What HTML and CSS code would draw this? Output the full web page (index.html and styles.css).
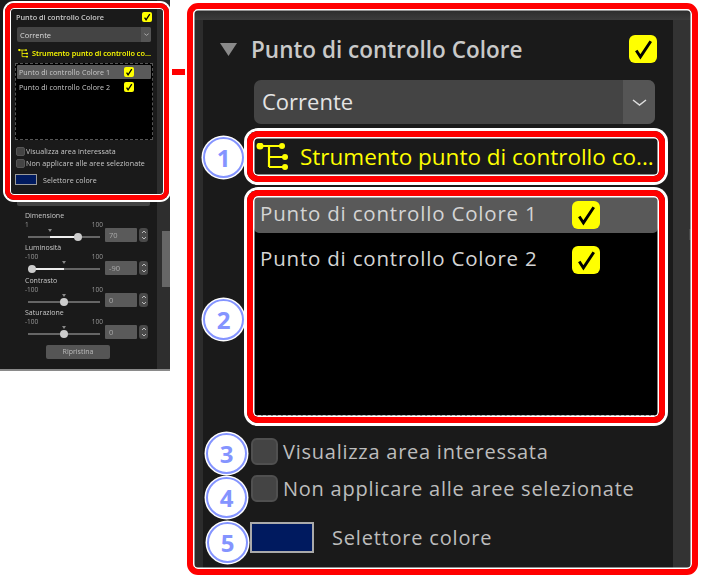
FILE: index.html
```html
<!DOCTYPE html>
<html lang="it">
<head>
<meta charset="utf-8">
<title>Punto di controllo Colore</title>
<link rel="stylesheet" href="styles.css">
</head>
<body>
<div class="canvas">

  <section class="mini">
    <div class="mini-main">
      <div class="mini-head">
        <span class="mini-title">Punto di controllo Colore</span>
        <span class="check mini-check"><svg viewBox="0 0 27 27"><path d="M7 15l4 6L21 6"/></svg></span>
      </div>
      <div class="mini-select"><span>Corrente</span><span class="mini-arrow"><svg viewBox="0 0 15 7"><path d="M1 1l6.500 5L14 1"/></svg></span></div>
      <div class="mini-tool">
        <svg class="mini-tree" viewBox="0 0 32 28"><path d="M4 3H26M13 3V24M13 14H29M13 24H29"/><circle cx="4" cy="3" r="3.500"/><circle cx="26" cy="3" r="3"/><circle cx="29" cy="14" r="3"/><circle cx="29" cy="24" r="3"/></svg>
        <span>Strumento punto di controllo co...</span>
      </div>
      <div class="mini-list">
        <div class="mini-row mini-row-on"><span class="mini-row-text">Punto di controllo Colore 1</span><span class="check mini-check"><svg viewBox="0 0 27 27"><path d="M7 15l4 6L21 6"/></svg></span></div>
        <div class="mini-row"><span class="mini-row-text">Punto di controllo Colore 2</span><span class="check mini-check"><svg viewBox="0 0 27 27"><path d="M7 15l4 6L21 6"/></svg></span></div>
      </div>
      <label class="mini-opt"><span class="mini-box"></span>Visualizza area interessata</label>
      <label class="mini-opt mini-opt-2"><span class="mini-box"></span>Non applicare alle aree selezionate</label>
      <div class="mini-color"><span class="mini-swatch"></span>Selettore colore</div>
      <div class="mini-bar"></div>

      <div class="slider">
        <div class="sl-name">Dimensione</div>
        <div class="sl-scale"><span>1</span><span>100</span></div>
        <div class="sl-track"><i class="sl-fill" style="left:30%;width:40%"></i><b class="sl-mark" style="left:30%"></b><em class="sl-thumb" style="left:70%"></em></div>
        <div class="sl-input">70</div>
        <div class="sl-spin"><svg viewBox="0 0 8 14"><path d="M2 5l2-2 2 2M2 9l2 2 2-2"/></svg></div>
      </div>
      <div class="slider">
        <div class="sl-name">Luminosità</div>
        <div class="sl-scale"><span>-100</span><span>100</span></div>
        <div class="sl-track"><i class="sl-fill" style="left:5%;width:45%"></i><b class="sl-mark" style="left:50%"></b><em class="sl-thumb" style="left:5%"></em></div>
        <div class="sl-input">-90</div>
        <div class="sl-spin"><svg viewBox="0 0 8 14"><path d="M2 5l2-2 2 2M2 9l2 2 2-2"/></svg></div>
      </div>
      <div class="slider">
        <div class="sl-name">Contrasto</div>
        <div class="sl-scale"><span>-100</span><span>100</span></div>
        <div class="sl-track"><b class="sl-mark" style="left:50%"></b><em class="sl-thumb" style="left:50%"></em></div>
        <div class="sl-input">0</div>
        <div class="sl-spin"><svg viewBox="0 0 8 14"><path d="M2 5l2-2 2 2M2 9l2 2 2-2"/></svg></div>
      </div>
      <div class="slider">
        <div class="sl-name">Saturazione</div>
        <div class="sl-scale"><span>-100</span><span>100</span></div>
        <div class="sl-track"><b class="sl-mark" style="left:50%"></b><em class="sl-thumb" style="left:50%"></em></div>
        <div class="sl-input">0</div>
        <div class="sl-spin"><svg viewBox="0 0 8 14"><path d="M2 5l2-2 2 2M2 9l2 2 2-2"/></svg></div>
      </div>
      <div class="mini-reset">Ripristina</div>
    </div>
    <div class="mini-side"><div class="mini-thumb"></div></div>
  </section>
  <div class="mini-frame"></div>
  <div class="connector"></div>

  <section class="panel">
    <div class="panel-strip"></div>
    <div class="panel-body">
      <div class="panel-gutter"></div>
      <div class="panel-main">
        <div class="head">
          <svg class="caret" viewBox="0 0 17 13"><path d="M0 0H17L8.500 13Z"/></svg>
          <span class="head-title">Punto di controllo Colore</span>
          <span class="check"><svg viewBox="0 0 27 27"><path d="M7 15l4 6L21 6"/></svg></span>
        </div>
        <div class="select">
          <span class="select-text">Corrente</span>
          <span class="select-arrow"><svg viewBox="0 0 15 7"><path d="M1 1l6.500 5L14 1"/></svg></span>
        </div>
        <div class="tool">
          <svg class="tree" viewBox="0 0 32 28"><path d="M4 3H26M13 3V24M13 14H29M13 24H29"/><circle cx="4" cy="3" r="3.500"/><circle cx="26" cy="3" r="3"/><circle cx="29" cy="14" r="3"/><circle cx="29" cy="24" r="3"/></svg>
          <span class="tool-text">Strumento punto di controllo co...</span>
        </div>
        <div class="list">
          <div class="row row-on"><span class="row-text">Punto di controllo Colore 1</span><span class="check"><svg viewBox="0 0 27 27"><path d="M7 15l4 6L21 6"/></svg></span></div>
          <div class="row"><span class="row-text">Punto di controllo Colore 2</span><span class="check"><svg viewBox="0 0 27 27"><path d="M7 15l4 6L21 6"/></svg></span></div>
        </div>
        <label class="opt opt-a"><span class="box"></span>Visualizza area interessata</label>
        <label class="opt opt-b"><span class="box"></span>Non applicare alle aree selezionate</label>
        <div class="color"><span class="swatch"></span>Selettore colore</div>
      </div>
      <div class="panel-side"><div class="side-mark"></div></div>
    </div>
  </section>
  <div class="frame"></div>
  <div class="callout callout-1"></div>
  <div class="callout callout-2"></div>
  <div class="num num-1">1</div>
  <div class="num num-2">2</div>
  <div class="num num-3">3</div>
  <div class="num num-4">4</div>
  <div class="num num-5">5</div>
</div>
</body>
</html>
```
FILE: styles.css
```css
* { box-sizing: border-box; }
html, body { margin: 0; padding: 0; background: #fff; }
body { font-family: "Open Sans", "Noto Sans", sans-serif; color: #c8c8c8; }
.canvas { position: relative; width: 704px; height: 578px; overflow: hidden; }

/* shared checkbox */
.check { display: flex; align-items: center; justify-content: center; flex: none; width: 28px; height: 28px; background: #ff0; border-radius: 6px; }
.check svg { width: 100%; height: 100%; }
.check path { fill: none; stroke: #000; stroke-width: 2.800; }

/* ---------- thumbnail panel ---------- */
.mini { position: absolute; left: 0; top: 0; width: 170px; height: 371px; display: flex; background: #1a1a1a; border-bottom: 2px solid #8a8a8a; filter: blur(0.25px); }
.mini-main { width: 157px; padding-top: 12px; flex: none; }
.mini-side { flex: 1; background: #2e2e2e; padding: 231px 0 0 5px; }
.mini-thumb { width: 8px; height: 56px; background: #666; }
.mini-head { display: flex; justify-content: space-between; align-items: center; height: 10px; padding: 0 5px 0 16px; }
.mini-title { font-size: 7.300px; font-weight: 600; white-space: nowrap; }
.mini-check { width: 10px; height: 10px; border-radius: 2px; }
.mini-check path { stroke-width: 3.500; }
.mini-select { display: flex; justify-content: space-between; align-items: center; height: 15px; margin: 5px 6px 0 17px; padding-left: 3px; background: #444; border-radius: 2px; font-size: 7.500px; color: #ddd; }
.mini-arrow { width: 10px; height: 15px; background: #555; border-radius: 0 2px 2px 0; display: flex; align-items: center; justify-content: center; }
.mini-arrow svg { width: 5px; height: 3px; }
.mini-arrow path { fill: none; stroke: #ccc; stroke-width: 2; }
.mini-tool { display: flex; align-items: center; gap: 4px; height: 10px; margin: 6px 0 0 18px; color: #ff0; font-size: 7.300px; font-weight: 600; white-space: nowrap; }
.mini-tree { width: 10px; height: 9px; flex: none; }
.mini-tree path { fill: none; stroke: #ff0; stroke-width: 2.500; }
.mini-tree circle { fill: #ff0; }
.mini-list { height: 77px; margin: 5px 4px 0 15px; padding: 1px; background: #000; border: 1px dashed #555; }
.mini-row { display: flex; align-items: center; height: 14px; padding: 0 0 0 2px; margin-bottom: 1px; }
.mini-row-on { background: #5a5a5a; border-radius: 1px; }
.mini-row-text { width: 105px; font-size: 7.100px; letter-spacing: 0.1px; white-space: nowrap; }
.mini-opt { display: flex; align-items: center; gap: 1px; height: 10px; margin: 6px 0 0 16px; font-size: 7.100px; letter-spacing: 0.1px; white-space: nowrap; }
.mini-opt-2 { margin-top: 2px; }
.mini-box { width: 9px; height: 9px; background: #444; border: 1px solid #555; border-radius: 2px; flex: none; }
.mini-color { display: flex; align-items: center; gap: 6px; height: 11px; margin: 6px 0 0 15px; font-size: 7.100px; letter-spacing: 0.1px; }
.mini-swatch { width: 22px; height: 11px; background: #001a5f; border: 1px solid #999; }
.mini-bar { height: 12px; margin: 9px 7px 5px 17px; background: #444; border-radius: 2px; }

.slider { display: grid; grid-template-columns: 78px 32px 9px; grid-template-rows: 10px 8px 14.300px; column-gap: 2px; height: 32.300px; margin-left: 25px; font-size: 7px; color: #b8b8b8; }
.sl-name { grid-column: 1 / 4; line-height: 10px; color: #c8c8c8; }
.sl-scale { grid-column: 1; grid-row: 2; display: flex; justify-content: space-between; line-height: 8px; font-size: 6.500px; color: #999; }
.sl-track { grid-column: 1; grid-row: 3; position: relative; height: 2px; margin: 7px 3px 0; background: #666; }
.sl-fill { position: absolute; top: 0; height: 2px; background: #eee; }
.sl-thumb { position: absolute; top: -3px; width: 8px; height: 8px; margin-left: -4px; border-radius: 50%; background: #ccc; }
.sl-mark { position: absolute; top: -7px; margin-left: -2px; border: 2px solid transparent; border-top: 3px solid #888; border-bottom: 0; }
.sl-input { grid-column: 2; grid-row: 2 / 4; align-self: end; height: 14px; margin-bottom: 1px; padding-left: 4px; background: #5a5a5a; border-radius: 1px; line-height: 14px; font-size: 7.500px; color: #aaa; }
.sl-spin { grid-column: 3; grid-row: 2 / 4; align-self: end; height: 14px; margin-bottom: 1px; background: #4a4a4a; border-radius: 3px; }
.sl-spin svg { display: block; width: 8px; height: 14px; margin: auto; }
.sl-spin path { fill: none; stroke: #bbb; stroke-width: 1; }
.mini-reset { width: 64px; height: 14px; margin: 5px 0 0 46px; background: #555; border-radius: 2px; text-align: center; line-height: 14px; font-size: 7px; color: #bbb; }

.mini-frame { position: absolute; left: 5px; top: 3px; width: 164px; height: 197px; border: 5px solid #f00; border-radius: 9px; box-shadow: 0 0 0 2px #fff, inset 0 0 0 1px #fff; }
.connector { position: absolute; left: 172px; top: 69px; width: 13px; height: 6px; background: #f00; }

/* ---------- enlarged panel ---------- */
.panel { position: absolute; left: 194px; top: 10px; width: 498px; height: 558px; display: flex; flex-direction: column; background: #333; }
.panel-strip { height: 10px; flex: none; background: linear-gradient(#2c2c2c, #3c3c3c); }
.panel-body { flex: 1; display: flex; }
.panel-gutter { width: 9px; flex: none; background: #2c2c2c; }
.panel-main { width: 470px; flex: none; background: #1a1a1a; padding-top: 15px; }
.panel-side { flex: 1; background: #333; padding: 209px 0 0 16px; }
.side-mark { width: 3px; height: 11px; background: #484848; }

.head { display: flex; align-items: center; height: 28px; padding: 0 16px 0 17px; }
.caret { width: 17px; height: 13px; flex: none; margin-right: 14px; }
.caret path { fill: #8a8a8a; }
.head-title { flex: 1; font-size: 22.500px; font-weight: 600; color: #c9c9c9; white-space: nowrap; }
.select { display: flex; justify-content: space-between; align-items: center; height: 44px; margin: 17px 18px 0 51px; padding: 0 0 0 8px; background: #444; border-radius: 7px; }
.select-text { font-size: 22px; color: #e4e4e4; margin-top: -2px; }
.select-arrow { width: 32px; height: 44px; display: flex; align-items: center; justify-content: center; background: #555; border-radius: 0 7px 7px 0; }
.select-arrow svg { width: 15px; height: 7px; }
.select-arrow path { fill: none; stroke: #ddd; stroke-width: 1.500; }
.tool { display: flex; align-items: center; height: 37px; margin: 14px 0 0 53px; }
.tree { width: 32px; height: 28px; flex: none; margin-right: 12px; }
.tree path { fill: none; stroke: #ff0; stroke-width: 2.200; }
.tree circle { fill: #ff0; }
.tool-text { font-size: 22.500px; color: #ff0; white-space: nowrap; }
.list { height: 220px; margin: 21px 14px 0 50px; padding: 0 1px; background: #000; border-bottom: 1px dashed #999; }
.row { display: flex; align-items: center; height: 37px; padding-left: 6px; margin-bottom: 8px; }
.row-on { background: #595959; border-radius: 0 0 5px 5px; }
.row-text { width: 312px; margin-top: -3px; font-size: 20.500px; letter-spacing: 0.800px; color: #d4d4d4; white-space: nowrap; }
.opt { display: flex; align-items: center; gap: 5px; height: 28px; margin-left: 48px; font-size: 20px; letter-spacing: 0.750px; color: #bdbdbd; white-space: nowrap; }
.opt-a { margin-top: 21px; }
.opt-b { margin-top: 9px; }
.box { width: 27px; height: 27px; flex: none; background: #444; border: 2px solid #505050; border-radius: 6px; }
.color { display: flex; align-items: center; gap: 18px; height: 31px; margin: 20px 0 0 47px; font-size: 20px; letter-spacing: 0.800px; color: #bdbdbd; }
.swatch { width: 64px; height: 31px; background: #001a5f; border: 2px solid #aaa; flex: none; }

.frame { position: absolute; left: 187px; top: 3px; width: 511px; height: 572px; border: 6px solid #f00; border-radius: 11px; box-shadow: inset 0 0 0 1.500px #fff; }
.callout { position: absolute; left: 247px; width: 418px; border: 6px solid #f00; border-radius: 11px; box-shadow: 0 0 0 3px #fff, inset 0 0 0 1.500px #fff; }
.callout-1 { top: 131px; height: 51px; }
.callout-2 { top: 190px; height: 233px; }

.num { position: absolute; width: 41px; height: 41px; border-radius: 50%; background: #fff; border: 2px solid #8494ff; box-shadow: 0 0 0 1.500px #fff; color: #8494ff; font-size: 24px; font-weight: 700; line-height: 37px; text-align: center; }
.num-1 { left: 203px; top: 137px; }
.num-2 { left: 203px; top: 299px; }
.num-3 { left: 206px; top: 433px; }
.num-4 { left: 206px; top: 477px; }
.num-5 { left: 207px; top: 522px; }
```
